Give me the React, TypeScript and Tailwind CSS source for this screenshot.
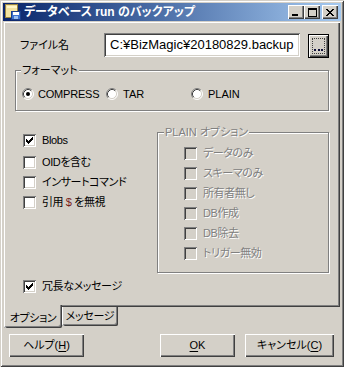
import React from "react";

const F = "font-['Liberation_Sans','Noto_Sans_CJK_JP',sans-serif] [font-feature-settings:'palt']";
const DIS = "text-[#808080] [text-shadow:1px_1px_0_#fff]";
const SUNKEN = "shadow-[inset_1px_1px_0_#808080,inset_-1px_-1px_0_#fff,inset_2px_2px_0_#404040,inset_-2px_-2px_0_#d4d0c8]";
const RAISED = "shadow-[inset_1px_1px_0_#fff,inset_-1px_-1px_0_#404040,inset_-2px_-2px_0_#808080]";

const CHECK = ["......X", ".....XX", "X...XXX", "XX.XXX.", "XXXXX..", ".XXX...", "..X...."];

function CheckMark() {
  const rects: React.ReactNode[] = [];
  CHECK.forEach((row, y) =>
    row.split("").forEach((c, x) => {
      if (c === "X") rects.push(<rect key={`${x}-${y}`} x={x} y={y} width={1} height={1} fill="#000" />);
    })
  );
  return (
    <svg width="7" height="7" shapeRendering="crispEdges">
      {rects}
    </svg>
  );
}

function Check({ checked, disabled }: { checked?: boolean; disabled?: boolean }) {
  return (
    <div
      className={`w-[13px] h-[13px] shrink-0 flex items-center justify-center ${
        disabled ? "bg-[#d4d0c8]" : "bg-white"
      } ${SUNKEN}`}
    >
      {checked && <CheckMark />}
    </div>
  );
}

function Radio({ checked }: { checked?: boolean }) {
  return (
    <svg width="12" height="12" className="shrink-0">
      <circle cx="6" cy="6" r="5" fill="#fff" />
      <path d="M2.11 9.89 A5.5 5.5 0 0 1 9.89 2.11" stroke="#808080" strokeWidth="1" fill="none" />
      <path d="M9.89 2.11 A5.5 5.5 0 0 1 2.11 9.89" stroke="#fff" strokeWidth="1" fill="none" />
      <path d="M2.82 9.18 A4.5 4.5 0 0 1 9.18 2.82" stroke="#404040" strokeWidth="1" fill="none" />
      <path d="M9.18 2.82 A4.5 4.5 0 0 1 2.82 9.18" stroke="#d4d0c8" strokeWidth="1" fill="none" />
      {checked && <circle cx="6" cy="6" r="2" fill="#000" />}
    </svg>
  );
}

function CheckRow({ label, checked, disabled }: { label: React.ReactNode; checked?: boolean; disabled?: boolean }) {
  return (
    <div className="flex items-center h-[13px]">
      <Check checked={checked} disabled={disabled} />
      <span className={`ml-[6px] text-[11px] leading-[13px] tracking-[-0.4px] whitespace-nowrap ${disabled ? DIS : "text-black"}`}>
        {label}
      </span>
    </div>
  );
}

function CaptionBtn({ children }: { children: React.ReactNode }) {
  return (
    <div className={`w-[16px] h-[14px] bg-[#d4d0c8] ${RAISED} flex items-center justify-center`}>{children}</div>
  );
}

function Button({ children, w, className = "" }: { children: React.ReactNode; w: string; className?: string }) {
  return (
    <div className={`${w} h-[23px] bg-[#d4d0c8] ${RAISED} flex items-center justify-center text-[11px] text-black ${className}`}>
      {children}
    </div>
  );
}

export default function App() {
  return (
    <div
      className={`${F} w-[344px] h-[367px] bg-[#d4d0c8] p-[3px] flex flex-col shadow-[inset_1px_1px_0_#d4d0c8,inset_-1px_-1px_0_#404040,inset_2px_2px_0_#fff,inset_-2px_-2px_0_#808080]`}
    >
      {/* Title bar */}
      <div className="h-[18px] flex items-center bg-gradient-to-r from-[#0a246a] to-[#a6caf0] pl-[2px] pr-[3px]">
        <svg width="16" height="16" viewBox="0 0 16 16" className="shrink-0" shapeRendering="crispEdges">
          <rect x="0.5" y="0.5" width="12" height="13" fill="#f3e3a0" stroke="#9a8440" />
          <rect x="1.5" y="1.5" width="10" height="2" fill="#fff6c8" />
          <rect x="6.5" y="7.5" width="9" height="8" fill="#3b72d0" stroke="#1c3f8a" />
          <rect x="8" y="8" width="6" height="3" fill="#ffffff" />
          <rect x="9" y="12" width="4" height="3" fill="#9cc0f0" />
        </svg>
        <span className="ml-[3px] text-white font-bold text-[12px] leading-[14px] whitespace-nowrap">
          データベース run のバックアップ
        </span>
        <div className="ml-auto flex items-center">
          <CaptionBtn>
            <svg width="8" height="7" shapeRendering="crispEdges">
              <rect x="0" y="5" width="6" height="2" fill="#000" />
            </svg>
          </CaptionBtn>
          <CaptionBtn>
            <svg width="9" height="9" shapeRendering="crispEdges">
              <rect x="0.5" y="0.5" width="8" height="8" fill="none" stroke="#000" />
              <rect x="0" y="1" width="9" height="1" fill="#000" />
            </svg>
          </CaptionBtn>
          <div className="ml-[2px]">
            <CaptionBtn>
              <svg width="8" height="7" shapeRendering="crispEdges">
                <path d="M0 0h2v1h-2zM6 0h2v1h-2zM1 1h2v1h-2zM5 1h2v1h-2zM2 2h4v1h-4zM3 3h2v1h-2zM2 4h4v1h-4zM1 5h2v1h-2zM5 5h2v1h-2zM0 6h2v1h-2zM6 6h2v1h-2z" fill="#000" />
              </svg>
            </CaptionBtn>
          </div>
        </div>
      </div>

      {/* Client */}
      <div className="mx-[1px] mt-[1px] flex flex-col">
        {/* Tab page */}
        <div className={`w-[336px] h-[285px] flex flex-col shadow-[inset_1px_1px_0_#fff,inset_-1px_-1px_0_#404040,inset_-2px_-2px_0_#808080]`}>
          {/* File row */}
          <div className="mt-[11px] flex items-start">
            <div className="ml-[16px] w-[84px] h-[24px] flex items-center text-[11px] text-black">ファイル名</div>
            <div className={`w-[196px] h-[24px] bg-white ${SUNKEN} flex items-center pl-[6px] text-[13px] text-black whitespace-nowrap`}>
              C:¥BizMagic¥20180829.backup
            </div>
            <div className={`ml-[8px] mt-[1px] w-[21px] h-[24px] border border-black bg-[#d4d0c8] ${RAISED} p-[3px]`}>
              <div className="w-full h-full border border-dotted border-[#404040] flex items-end justify-center pb-[2px]">
                <svg width="9" height="2" shapeRendering="crispEdges">
                  <rect x="0" y="0" width="2" height="2" fill="#10103a" />
                  <rect x="4" y="0" width="2" height="2" fill="#10103a" />
                  <rect x="7" y="0" width="2" height="2" fill="#10103a" />
                </svg>
              </div>
            </div>
          </div>

          {/* Format group */}
          <div className="relative ml-[11px] mt-[12px] w-[314px] h-[41px] border border-[#808080] shadow-[1px_1px_0_#fff,inset_1px_1px_0_#fff]">
            <span className="absolute top-[-8px] left-[5px] bg-[#d4d0c8] px-[1px] text-[11px] leading-[14px] text-black">
              フォーマット
            </span>
            <div className="mt-[17px] pl-[6px] flex items-center h-[12px]">
              <div className="w-[84px] flex items-center">
                <Radio checked />
                <span className="ml-[4px] text-[11px] leading-[13px] text-black tracking-[-0.2px]">COMPRESS</span>
              </div>
              <div className="w-[85px] flex items-center">
                <Radio />
                <span className="ml-[5px] text-[11px] leading-[13px] text-black">TAR</span>
              </div>
              <div className="flex items-center">
                <Radio />
                <span className="ml-[5px] text-[11px] leading-[13px] text-black">PLAIN</span>
              </div>
            </div>
          </div>

          {/* Two columns */}
          <div className="mt-[21px] flex items-start">
            <div className="ml-[19px] w-[134px] flex flex-col">
              <div className="mt-[2px]">
                <CheckRow label="Blobs" checked />
              </div>
              <div className="mt-[9px]">
                <CheckRow label="OIDを含む" />
              </div>
              <div className="mt-[7px]">
                <CheckRow label="インサートコマンド" />
              </div>
              <div className="mt-[7px]">
                <CheckRow
                  label={
                    <>
                      引用 <span className="text-[#7a2020]">$</span> を無視
                    </>
                  }
                />
              </div>
            </div>
            <div className="relative w-[172px] h-[141px] border border-[#808080] shadow-[1px_1px_0_#fff,inset_1px_1px_0_#fff] pl-[26px] pt-[14px] flex flex-col gap-[7px]">
              <span className={`absolute top-[-8px] left-[6px] bg-[#d4d0c8] px-[1px] text-[11px] leading-[14px] ${DIS}`}>
                PLAIN オプション
              </span>
              <CheckRow label="データのみ" disabled />
              <CheckRow label="スキーマのみ" disabled />
              <CheckRow label="所有者無し" disabled />
              <CheckRow label="DB作成" disabled />
              <CheckRow label="DB除去" disabled />
              <CheckRow label="トリガー無効" disabled />
            </div>
          </div>

          <div className="ml-[19px] mt-[7px]">
            <CheckRow label="冗長なメッセージ" checked />
          </div>
        </div>

        {/* Tabs */}
        <div className="flex items-start">
          <div className="relative z-10 mt-[-2px] w-[58px] h-[23px] bg-[#d4d0c8] shadow-[inset_1px_0_0_#fff,inset_-1px_-1px_0_#404040,inset_-2px_-2px_0_#808080] flex items-center justify-center pt-[3px] text-[11px] tracking-[-0.3px] text-black rounded-b-[2px]">
            オプション
          </div>
          <div className="w-[56px] h-[19px] bg-[#d4d0c8] shadow-[inset_1px_0_0_#fff,inset_-1px_-1px_0_#404040,inset_-2px_-2px_0_#808080] flex items-center justify-center text-[11px] tracking-[-0.3px] text-black rounded-b-[2px]">
            メッセージ
          </div>
        </div>

        {/* Buttons */}
        <div className="mt-[6px] flex items-start">
          <Button w="w-[75px]" className="ml-[5px]">
            ヘルプ(<span className="underline underline-offset-2">H</span>)
          </Button>
          <Button w="w-[75px]" className="ml-[76px]">
            <span className="underline underline-offset-2">O</span>K
          </Button>
          <Button w="w-[89px]" className="ml-[10px]">
            キャンセル(<span className="underline underline-offset-2">C</span>)
          </Button>
        </div>
      </div>
    </div>
  );
}
